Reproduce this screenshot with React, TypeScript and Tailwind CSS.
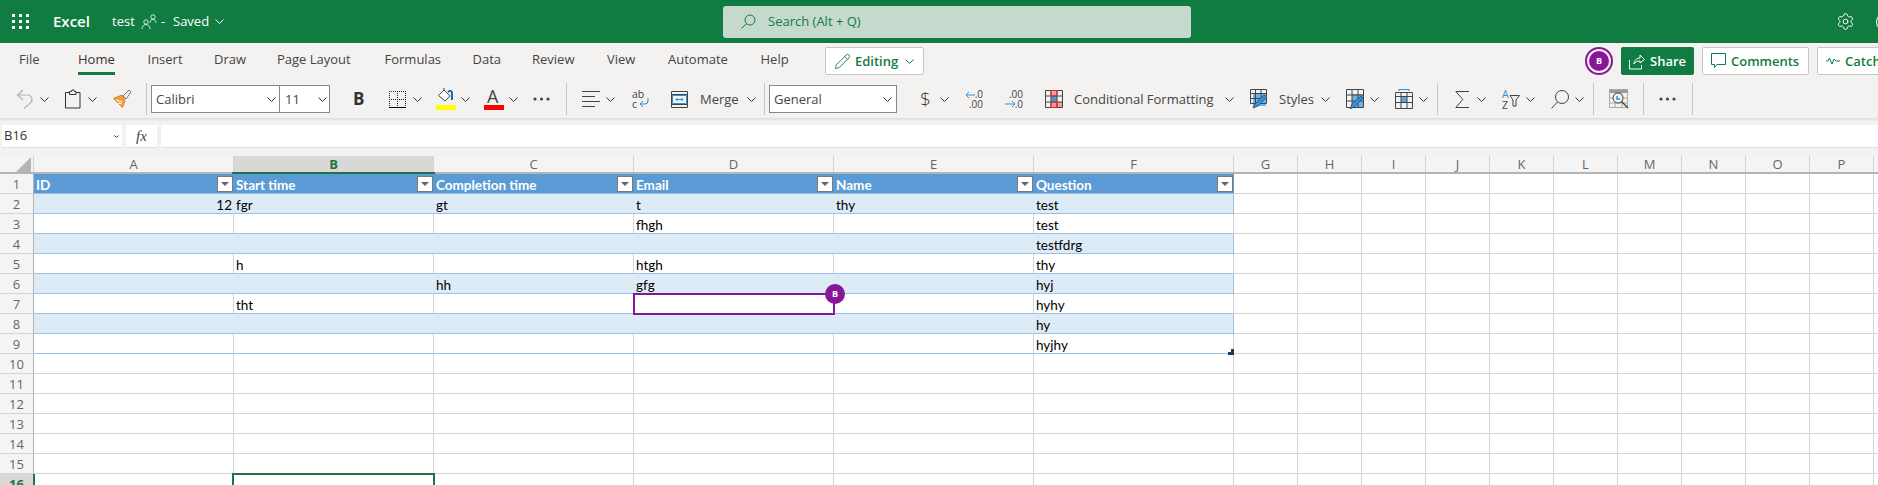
import React from 'react';
import { Pencil, Settings } from 'lucide-react';

type P = { className?: string };

const UI = "font-['Open_Sans',sans-serif]";

const Chev = ({ className = '' }: P) => (
  <svg width="9" height="5" viewBox="0 0 9 5" fill="none" stroke="#333" className={`shrink-0 ${className}`}>
    <path d="M.5.5l4 4 4-4" />
  </svg>
);

const Sep = ({ className = '' }: P) => <div className={`w-px h-8 bg-[#c8c6c4] shrink-0 ${className}`} />;

const Dots = ({ className = '' }: P) => (
  <svg width="17" height="4" viewBox="0 0 17 4" fill="#444" className={`shrink-0 ${className}`}>
    <circle cx="2" cy="2" r="1.6" />
    <circle cx="8.5" cy="2" r="1.6" />
    <circle cx="15" cy="2" r="1.6" />
  </svg>
);

const Undo = ({ className = '' }: P) => (
  <svg width="18" height="20" viewBox="0 0 18 20" fill="none" stroke="#b4b2b0" strokeWidth="1.2" className={`shrink-0 ${className}`}>
    <path d="M7 1L1.5 6 7 11M2 6h9.5a4.5 4.5 0 0 1 3.2 7.6L8 19.5" />
  </svg>
);

const Clipboard = ({ className = '' }: P) => (
  <svg width="16" height="20" viewBox="0 0 16 20" fill="none" stroke="#333" className={`shrink-0 ${className}`}>
    <path d="M4.5 3.5H.5v15.500h14.500V3.500h-4" />
    <path d="M4.500 5.500V2.500h2l.5-1.500h2l.5 1.500h1.500v3z" />
  </svg>
);

const Painter = ({ className = '' }: P) => (
  <svg width="19" height="20" viewBox="0 0 19 20" fill="none" className={`shrink-0 ${className}`}>
    <path d="M.500 9.500L9 6l3 5.500-2.500 7z" fill="#f0a33b" stroke="#dd7c1e" />
    <path d="M3 11l6 2M5 14l4 1" stroke="#fff" />
    <path d="M10 7l6-6 2 2-5 7z" fill="#eee" stroke="#777" />
  </svg>
);

const Borders = ({ className = '' }: P) => (
  <svg width="17" height="17" viewBox="0 0 17 17" fill="none" stroke="#222" className={`shrink-0 ${className}`}>
    <path d="M0 .500h17M0 8.500h17M.500 0v16M8.500 0v16M16.500 0v16" strokeDasharray="1 1" />
    <path d="M0 16.500h17" stroke="#000" />
  </svg>
);

const Fill = ({ className = '' }: P) => (
  <div className={`relative w-5 h-[22px] shrink-0 ${className}`}>
    <svg width="20" height="16" viewBox="0 0 20 16" fill="none" className="absolute top-0 left-0">
      <path d="M2.500 7.500L8 2l6 6-5 5z" stroke="#444" fill="#fff" />
      <path d="M8 2V0" stroke="#444" />
      <path d="M12 4c2-2 4-1 4 1v7" stroke="#1a6fb5" strokeWidth="2" />
    </svg>
    <div className="absolute bottom-0 left-0 w-5 h-[5px] bg-[#ffff00]" />
  </div>
);

const FontColor = ({ className = '' }: P) => (
  <div className={`relative w-5 h-[22px] shrink-0 ${className}`}>
    <span className={`absolute -top-[3px] left-[3px] text-[18px] leading-[22px] text-[#444] ${UI}`}>A</span>
    <div className="absolute bottom-0 left-0 w-5 h-[5px] bg-[#ff0000]" />
  </div>
);

const Align = ({ className = '' }: P) => (
  <svg width="18" height="17" viewBox="0 0 18 17" stroke="#444" className={`shrink-0 ${className}`}>
    <path d="M0 .500h18M0 5.500h13M0 10.500h18M0 15.500h13" />
  </svg>
);

const Wrap = ({ className = '' }: P) => (
  <svg width="18" height="20" viewBox="0 0 18 20" fill="none" className={`shrink-0 ${className}`}>
    <text x="0" y="9" fontSize="10.500" fill="#444" fontFamily="Open Sans">ab</text>
    <text x="0" y="19" fontSize="10.500" fill="#444" fontFamily="Open Sans">c</text>
    <path d="M16 9v3a3 3 0 0 1-3 3H8M11 12l-3 3 3 3" stroke="#2f8fd8" />
  </svg>
);

const MergeIcon = ({ className = '' }: P) => (
  <svg width="17" height="17" viewBox="0 0 17 17" fill="none" className={`shrink-0 ${className}`}>
    <path d="M.500.500h16v16H.500zM.500 3.500h16M.500 13.500h16" stroke="#444" />
    <path d="M1.500 4.500h14v8h-14z" stroke="#2f8fd8" />
    <path d="M5 8.500h7M6.500 7l-1.500 1.500 1.500 1.500M10.500 7l1.500 1.500-1.500 1.500" stroke="#2f8fd8" />
  </svg>
);

const Dollar = ({ className = '' }: P) => (
  <span className={`w-[9px] shrink-0 text-[19px] leading-[24px] text-[#333] font-light ${UI} ${className}`}>$</span>
);

const DecLeft = ({ className = '' }: P) => (
  <svg width="18" height="20" viewBox="0 0 18 20" fill="none" className={`shrink-0 ${className}`}>
    <path d="M10 6H1M4 3L1 6l3 3" stroke="#2f8fd8" />
    <text x="18" y="9" textAnchor="end" fontSize="10" fill="#444" fontFamily="Open Sans">.0</text>
    <text x="18" y="19" textAnchor="end" fontSize="10" fill="#444" fontFamily="Open Sans">.00</text>
  </svg>
);

const DecRight = ({ className = '' }: P) => (
  <svg width="18" height="20" viewBox="0 0 18 20" fill="none" className={`shrink-0 ${className}`}>
    <text x="18" y="9" textAnchor="end" fontSize="10" fill="#444" fontFamily="Open Sans">.00</text>
    <path d="M0 15h10M7 12l3 3-3 3" stroke="#2f8fd8" />
    <text x="18" y="19" textAnchor="end" fontSize="10" fill="#444" fontFamily="Open Sans">.0</text>
  </svg>
);

const CondFormat = ({ className = '' }: P) => (
  <svg width="18" height="18" viewBox="0 0 18 18" fill="none" className={`shrink-0 ${className}`}>
    <path d="M6 .500h6V6H6zM6 12h11.500v5.500H6z" fill="#f79a9a" />
    <path d="M6 6h6v6H6z" fill="#4a9ad8" />
    <path d="M.500.500h17v17H.500zM.500 6h17M.500 12h17M6 .500v17M12 .500v17" stroke="#444" />
    <path d="M6 .500h6V6H6zM6 12h6v5.500H6z" stroke="#e02b2b" />
  </svg>
);

const Styles = ({ className = '' }: P) => (
  <svg width="19" height="20" viewBox="0 0 19 20" fill="none" className={`shrink-0 ${className}`}>
    <path d="M3 4h13v13H3z" fill="#6db1e8" />
    <path d="M.500.500h16v14H.500zM.500 4.500h16M.500 9.500h16M5.500.500v14M11 .500v14" stroke="#444" />
    <path d="M3 19l2-4 9-9 3 2-9 9z" fill="#3a8fd6" stroke="#2a5f8a" />
  </svg>
);

const TableFmt = ({ className = '' }: P) => (
  <svg width="19" height="20" viewBox="0 0 19 20" fill="none" className={`shrink-0 ${className}`}>
    <path d="M6 5h12v13H6z" fill="#6db1e8" />
    <path d="M.500.500h17v18H.500zM.500 6h17M.500 12h17M6 .500v18M12 .500v18" stroke="#444" />
    <path d="M4 20l2-5 9-8 2 2-9 9z" fill="#3a8fd6" stroke="#2a5f8a" />
  </svg>
);

const Cells = ({ className = '' }: P) => (
  <svg width="18" height="20" viewBox="0 0 18 20" fill="none" className={`shrink-0 ${className}`}>
    <path d="M6 7h6v6H6z" fill="#5aa5e0" />
    <path d="M.500 3.500h17v16H.500zM.500 7.500h17M.500 13.500h17M6 3.500v16M12 3.500v16" stroke="#444" />
    <path d="M4 .500h10M4 0v2M14 0v2" stroke="#2f8fd8" />
  </svg>
);

const Sigma = ({ className = '' }: P) => (
  <svg width="14" height="17" viewBox="0 0 14 17" fill="none" stroke="#444" className={`shrink-0 ${className}`}>
    <path d="M14 .500H.800l7 8L.800 16.500H14" />
  </svg>
);

const Sort = ({ className = '' }: P) => (
  <svg width="18" height="20" viewBox="0 0 18 20" fill="none" className={`shrink-0 ${className}`}>
    <text x="0" y="9" fontSize="10.500" fill="#2f8fd8" fontFamily="Open Sans">A</text>
    <text x="0" y="19.500" fontSize="10.500" fill="#444" fontFamily="Open Sans">Z</text>
    <path d="M8 6.500h9.500L14 11v6h-3v-6z" stroke="#444" />
  </svg>
);

const Find = ({ className = '' }: P) => (
  <svg width="18" height="19" viewBox="0 0 18 19" fill="none" stroke="#444" className={`shrink-0 ${className}`}>
    <circle cx="11" cy="7" r="6.500" />
    <path d="M6.500 12L.500 18.500" />
  </svg>
);

const Analyze = ({ className = '' }: P) => (
  <svg width="20" height="20" viewBox="0 0 20 20" fill="none" className={`shrink-0 ${className}`}>
    <path d="M0 0h19v4H0z" fill="#999" />
    <path d="M.500.500h18v18H.500zM.500 9h18M.500 14h18M6 4v15M13 4v15" stroke="#aaa" />
    <circle cx="9" cy="9" r="5" fill="#f3f2f1" stroke="#444" />
    <path d="M8 11V7M10 11V9" stroke="#2f8fd8" strokeWidth="1.500" />
    <path d="M12.500 12.500l6.500 6.500" stroke="#444" strokeWidth="1.400" />
  </svg>
);

const Filter = () => (
  <div className="absolute right-[1px] top-[2px] w-4 h-4 bg-white border border-[#7a7a7a] flex items-center justify-center">
    <div className="w-0 h-0 border-l-[4px] border-r-[4px] border-t-[4px] border-l-transparent border-r-transparent border-t-[#666]" />
  </div>
);

const tabs = [
  { label: 'File', cls: 'w-[59px]' },
  { label: 'Home', cls: 'w-[69.500px]', active: true },
  { label: 'Insert', cls: 'w-[66.500px]' },
  { label: 'Draw', cls: 'w-[63px]' },
  { label: 'Page Layout', cls: 'w-[107.500px]' },
  { label: 'Formulas', cls: 'w-[88px]' },
  { label: 'Data', cls: 'w-[59.500px]' },
  { label: 'Review', cls: 'w-[75px]' },
  { label: 'View', cls: 'w-[61px]' },
  { label: 'Automate', cls: 'w-[92.500px]' },
  { label: 'Help', cls: 'w-[63.500px]' },
];

const headers = ['ID', 'Start time', 'Completion time', 'Email', 'Name', 'Question'];

const rows: string[][] = [
  ['12', 'fgr', 'gt', 't', 'thy', 'test'],
  ['', '', '', 'fhgh', '', 'test'],
  ['', '', '', '', '', 'testfdrg'],
  ['', 'h', '', 'htgh', '', 'thy'],
  ['', '', 'hh', 'gfg', '', 'hyj'],
  ['', 'tht', '', '', '', 'hyhy'],
  ['', '', '', '', '', 'hy'],
  ['', '', '', '', '', 'hyjhy'],
];

const letters = ['A', 'B', 'C', 'D', 'E', 'F'];
const extraLetters = ['G', 'H', 'I', 'J', 'K', 'L', 'M', 'N', 'O', 'P'];
const gridCols = 'grid grid-cols-[34px_repeat(6,200px)_repeat(10,64px)_4px]';
const cellFont = "font-['Lato',sans-serif] text-[13.500px] leading-[18px] pt-[2px]";

const RowHead = ({ n, selected }: { n: number; selected?: boolean }) => (
  <div
    className={`h-5 pt-[2px] border-r border-r-[#b4b4b4] border-b border-b-[#d4d4d4] flex items-center justify-center text-[13px] ${UI} ${
      selected ? 'bg-[#d9d8d6] text-[#217346] font-bold' : 'bg-[#f4f4f4] text-[#666]'
    }`}
  >
    {n}
  </div>
);

const ExtraCells = () => (
  <>
    {extraLetters.map((l) => (
      <div key={l} className="h-5 border-r border-b border-[#d4d4d4]" />
    ))}
    <div className="h-5 border-b border-[#d4d4d4]" />
  </>
);

export default function App() {
  return (
    <div className={`w-[1878px] h-[485px] overflow-hidden bg-[#f3f2f1] ${UI}`}>
      {/* Title bar */}
      <div className="h-[43px] bg-[#107c41] flex items-center text-white overflow-hidden">
        <svg width="18" height="16" viewBox="0 0 18 16" fill="#fff" className="ml-3 shrink-0">
          <path d="M0 0h3v3H0zM7 0h3v3H7zM14 0h3v3h-3zM0 6h3v3H0zM7 6h3v3H7zM14 6h3v3h-3zM0 12h3v3H0zM7 12h3v3H7zM14 12h3v3h-3z" />
        </svg>
        <span className="ml-[23px] w-[59px] shrink-0 text-[15px] font-semibold">Excel</span>
        <span className="w-[29px] shrink-0 text-[13px]">test</span>
        <svg width="16" height="16" viewBox="0 0 16 16" fill="none" stroke="#fff" strokeWidth=".8" className="shrink-0">
          <circle cx="5" cy="8" r="2.200" />
          <path d="M1 15c0-3 2-4.500 4-4.500S9 12 9 15" />
          <circle cx="12" cy="3" r="2.200" />
          <path d="M9 9c0-2.500 1.500-3.500 3-3.500s3 1 3 3.500" />
        </svg>
        <span className="ml-1 w-3 shrink-0 text-[13px]">-</span>
        <span className="w-[42px] shrink-0 text-[13px]">Saved</span>
        <Chev className="[&_path]:stroke-white" />
        <div className="ml-[499px] w-[468px] h-8 rounded-[3px] bg-[#c5dacd] flex items-center text-[13px] text-[#107c41] shrink-0">
          <svg width="15" height="15" viewBox="0 0 15 15" fill="none" stroke="#107c41" className="ml-[18px]">
            <circle cx="9" cy="6" r="5" />
            <path d="M5.500 9.500L.500 14.500" />
          </svg>
          <span className="ml-3">Search (Alt + Q)</span>
        </div>
        <Settings size={19} strokeWidth={1.2} className="ml-[645px] shrink-0" />
        <div className="ml-[21px] w-5 h-5 rounded-full border border-white shrink-0" />
      </div>

      {/* Ribbon */}
      <div className="h-[76px] border-b border-[#e1dfdd] shadow-[0_1px_2px_rgba(0,0,0,0.08)]">
        <div className="h-[37px] flex items-start overflow-hidden">
          <div className="ml-[19px] flex h-[31px] shrink-0">
            {tabs.map((t) => (
              <div key={t.label} className={`${t.cls} pt-[6px] text-[13px] leading-5 text-[#444]`}>
                <span className={`relative inline-block whitespace-nowrap ${t.active ? 'text-[#333]' : ''}`}>
                  {t.label}
                  {t.active && <span className="absolute left-0 right-0 top-[23px] h-[2.500px] bg-[#107c41]" />}
                </span>
              </div>
            ))}
          </div>
          <div className="ml-[1px] mt-1 w-[99px] h-7 bg-white border border-[#c8c6c4] rounded-[2px] flex items-center text-[#107c41] text-[13px] font-semibold shrink-0">
            <Pencil size={17} strokeWidth={1.25} className="ml-2" />
            <span className="ml-[4px] w-[50px] pt-[1px]">Editing</span>
            <Chev className="[&_path]:stroke-[#107c41]" />
          </div>
          <div className="ml-[661px] mt-1 w-7 h-7 rounded-full border-2 border-[#881798] p-[2px] shrink-0">
            <div className="w-full h-full rounded-full bg-[#881798] text-white text-[9px] font-bold flex items-center justify-center">B</div>
          </div>
          <div className="ml-2 mt-1 w-[73px] h-7 rounded-[2px] bg-[#107c41] text-white text-[13px] font-semibold flex items-center shrink-0">
            <svg width="16" height="17" viewBox="0 0 16 17" fill="none" stroke="#fff" className="ml-2">
              <path d="M.500 7v9h12v-4M5 11c0-4 3-6 6-6V2l4.500 4.500L11 10V8c-3 0-5 1-6 3z" />
            </svg>
            <span className="ml-[5px] pt-[1px]">Share</span>
          </div>
          <div className="ml-2 mt-1 w-[107px] h-7 rounded-[2px] bg-white border border-[#c8c6c4] text-[#107c41] text-[13px] font-semibold flex items-center shrink-0">
            <svg width="15" height="16" viewBox="0 0 15 16" fill="none" stroke="#107c41" className="ml-2">
              <path d="M.500.500h14v11H6l-2.500 3v-3h-3z" />
            </svg>
            <span className="ml-[5px] pt-[1px]">Comments</span>
          </div>
          <div className="ml-2 mt-1 w-[80px] h-7 rounded-[2px] bg-white border border-[#c8c6c4] text-[#107c41] text-[13px] font-semibold flex items-center shrink-0">
            <svg width="14" height="10" viewBox="0 0 14 10" fill="none" stroke="#107c41" className="ml-2 shrink-0">
              <path d="M0 5h2l1.500-3L6 8l2-5 2 2h4" />
            </svg>
            <span className="ml-[5px] pt-[1px]">Catch</span>
          </div>
        </div>

        <div className="mt-[3px] h-8 flex items-center text-[13px] text-[#444] overflow-hidden">
          <Undo className="ml-[16px]" />
          <Chev className="ml-[6px]" />
          <Clipboard className="ml-[16px]" />
          <Chev className="ml-[7px]" />
          <Painter className="ml-[16px]" />
          <Sep className="ml-[14px]" />
          <div className="ml-[4px] w-[179px] h-7 bg-white border border-[#8a8886] flex items-center shrink-0">
            <span className="ml-1 w-[111px] shrink-0 pt-[2px]">Calibri</span>
            <Chev />
            <span className="ml-[3px] w-px h-full bg-[#8a8886] shrink-0" />
            <span className="ml-[5px] w-[33px] shrink-0 pt-[2px]">11</span>
            <Chev />
          </div>
          <span className="ml-[23px] w-[11px] text-[17px] font-bold text-[#333] leading-6 shrink-0">B</span>
          <Borders className="ml-[25px]" />
          <Chev className="ml-[7px]" />
          <Fill className="ml-[14px]" />
          <Chev className="ml-[5px]" />
          <FontColor className="ml-[14px]" />
          <Chev className="ml-[5px]" />
          <Dots className="ml-[15px]" />
          <Sep className="ml-[16px]" />
          <Align className="ml-[15px]" />
          <Chev className="ml-[6px]" />
          <Wrap className="ml-[17px]" />
          <MergeIcon className="ml-[21px]" />
          <span className="ml-[12px] w-[41px] shrink-0 pt-[2px]">Merge</span>
          <Chev className="ml-[6px]" />
          <Sep className="ml-[8px]" />
          <div className="ml-[4px] w-[128px] h-7 bg-white border border-[#8a8886] flex items-center shrink-0">
            <span className="ml-1 w-[109px] shrink-0 pt-[2px]">General</span>
            <Chev />
          </div>
          <Dollar className="ml-[23px]" />
          <Chev className="ml-[11px]" />
          <DecLeft className="ml-[16px]" />
          <DecRight className="ml-[22px]" />
          <CondFormat className="ml-[22px]" />
          <span className="ml-[11px] w-[143px] shrink-0 whitespace-nowrap pt-[2px]">Conditional Formatting</span>
          <Chev className="ml-[8px]" />
          <Styles className="ml-[16px]" />
          <span className="ml-[10px] w-[35px] shrink-0 pt-[2px]">Styles</span>
          <Chev className="ml-[7px]" />
          <TableFmt className="ml-[16px]" />
          <Chev className="ml-[5px]" />
          <Cells className="ml-[16px]" />
          <Chev className="ml-[6px]" />
          <Sep className="ml-[9px]" />
          <Sigma className="ml-[17px]" />
          <Chev className="ml-[8px]" />
          <Sort className="ml-[16px]" />
          <Chev className="ml-[6px]" />
          <Find className="ml-[16px]" />
          <Chev className="ml-[6px]" />
          <Sep className="ml-[9px]" />
          <Analyze className="ml-[15px]" />
          <Sep className="ml-[14px]" />
          <Dots className="ml-[15px]" />
          <Sep className="ml-[16px]" />
        </div>
      </div>

      {/* Formula bar */}
      <div className="mt-[6px] h-[23px] flex">
        <div className="ml-[2px] w-[120px] bg-white border-b border-[#e1dfdd] flex items-center text-[13px] text-[#333]">
          <span className="ml-[2px] w-[110px]">B16</span>
          <svg width="5" height="3" viewBox="0 0 5 3" fill="none" stroke="#333"><path d="M.500.500l2 2 2-2" /></svg>
        </div>
        <div className="ml-1 w-[31px] bg-white border-b border-[#e1dfdd] flex items-center justify-center font-['Liberation_Serif',serif] italic text-[15px] text-[#444]">fx</div>
        <div className="ml-1 flex-1 bg-white border-b border-[#e1dfdd]" />
      </div>

      {/* Sheet */}
      <div className="relative mt-2 bg-white h-[329px] overflow-hidden">
        <div className={`${gridCols} h-[18px] bg-[#f4f4f4] border-b-2 border-[#b4b4b4] text-[13px] text-[#666]`}>
          <div className="relative border-r border-[#d4d4d4]">
            <svg width="15" height="15" viewBox="0 0 15 15" className="absolute left-4 top-[1px]"><path d="M15 0v15H0z" fill="#b4b4b4" /></svg>
          </div>
          {letters.map((l) => (
            <div
              key={l}
              className={`border-r border-[#d4d4d4] flex items-center justify-center leading-4 ${l === 'B' ? 'bg-[#d9d8d6] text-[#217346] font-bold' : ''}`}
            >
              {l}
            </div>
          ))}
          {extraLetters.map((l) => (
            <div key={l} className="border-r border-[#d4d4d4] flex items-center justify-center leading-4">{l}</div>
          ))}
          <div />
        </div>

        <div className={gridCols}>
          <RowHead n={1} />
          {headers.map((h) => (
            <div key={h} className={`relative h-5 bg-[#5b9bd5] border-b border-[#9bc2e6] pl-[2px] text-white font-bold whitespace-nowrap ${cellFont}`}>
              {h}
              <Filter />
            </div>
          ))}
          <ExtraCells />
          {rows.map((row, i) => {
            const banded = i % 2 === 0;
            return (
              <React.Fragment key={i}>
                <RowHead n={i + 2} />
                {row.map((v, j) => (
                  <div
                    key={j}
                    className={`h-5 border-b border-b-[#9bc2e6] px-[2px] text-black whitespace-nowrap ${cellFont} ${
                      banded ? 'bg-[#ddebf7]' : 'bg-white border-r border-r-[#d4d4d4]'
                    } ${j === 0 && v ? 'text-right' : ''} ${j === 5 ? 'border-r border-r-[#9bc2e6]' : ''}`}
                  >
                    {v}
                  </div>
                ))}
                <ExtraCells />
              </React.Fragment>
            );
          })}
          {[10, 11, 12, 13, 14, 15, 16].map((n) => (
            <React.Fragment key={n}>
              <RowHead n={n} selected={n === 16} />
              {letters.map((l) => (
                <div key={l} className="h-5 border-r border-b border-[#d4d4d4]" />
              ))}
              <ExtraCells />
            </React.Fragment>
          ))}
        </div>

        {/* selection overlays */}
        <div className="absolute left-[232px] top-[16px] w-[203px] h-[2px] bg-[#217346]" />
        <div className="absolute left-[33px] top-[318px] w-[2px] h-[12px] bg-[#217346]" />
        <div className="absolute left-[232px] top-[317px] w-[203px] h-[30px] border-2 border-[#217346]" />
        <div className="absolute left-[633px] top-[137px] w-[202px] h-[22px] border-2 border-[#881798]" />
        <div className="absolute left-[825px] top-[128px] w-5 h-5 rounded-full bg-[#881798] text-white text-[9px] font-bold flex items-center justify-center">B</div>
        <svg width="6" height="6" viewBox="0 0 6 6" fill="#0f3c64" className="absolute left-[1228px] top-[193px]">
          <path d="M0 3h3V0h3v6H0z" />
        </svg>
      </div>
    </div>
  );
}
